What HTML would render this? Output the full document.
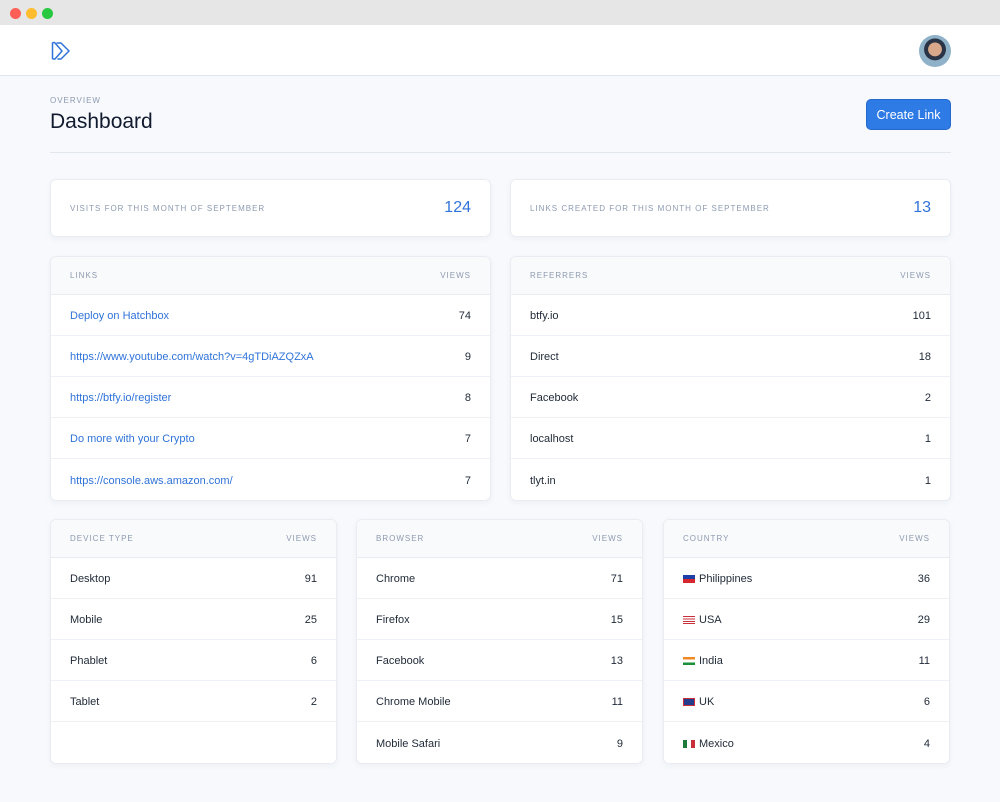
<!DOCTYPE html>
<html><head><meta charset="utf-8"><style>
*{box-sizing:border-box;margin:0;padding:0}
body{width:1000px;height:802px;background:#f7f9fc;font-family:"Liberation Sans",sans-serif;position:relative;overflow:hidden;color:#1a2233}
.tb{position:absolute;left:0;top:0;width:1000px;height:25px;background:#e6e6e6}
.dot{position:absolute;top:8px;width:11px;height:11px;border-radius:50%}
.nav{position:absolute;left:0;top:25px;width:1000px;height:51px;background:#fff;border-bottom:1px solid #dfe6f0}
.card{position:absolute;background:#fff;border:1px solid #e9edf3;border-radius:6px;box-shadow:0 2px 6px rgba(30,50,90,.05);overflow:hidden}
.lbl{font-size:8px;letter-spacing:1px;color:#8d9ab0;text-transform:uppercase}
.hd{height:38px;background:#f9fafc;border-bottom:1px solid #e9edf3;display:flex;justify-content:space-between;align-items:center;padding:0 19px}
.row{height:41px;border-bottom:1px solid #edf1f6;display:flex;justify-content:space-between;align-items:center;padding:2px 19px 0;font-size:11px;color:#1f2937}
.row:last-child{border-bottom:none}
.a{color:#2f73d9}
.fl{display:inline-block;width:12px;height:8px;vertical-align:-1px;margin-right:4px}
</style></head><body>
<div class="tb"><div class="dot" style="left:10px;background:#fe5f57"></div><div class="dot" style="left:26px;background:#febc2e"></div><div class="dot" style="left:42px;background:#28c840"></div></div>
<div class="nav">
<svg style="position:absolute;left:50px;top:15px" width="24" height="22" viewBox="0 0 24 22" fill="none" stroke="#2f73d9" stroke-width="1.5" stroke-linejoin="round" stroke-linecap="round"><path d="M2.5 3 V18 Q2.5 19 3.5 19 H5 L12 11 L5 3 Q4 2 2.5 3 Z"/><path d="M7 3 H11 L19 11 L11 19 H8"/></svg>
<div style="position:absolute;left:919px;top:10px;width:32px;height:32px;border-radius:50%;background:radial-gradient(circle at 50% 45%,#d9a88a 0 28%,#2b3346 30% 45%,#8fb2c8 47%);"></div>
</div>
<div class="lbl" style="position:absolute;left:50px;top:96px;font-size:8px">Overview</div>
<div style="position:absolute;left:50px;top:110px;font-size:21px;color:#111a2e">Dashboard</div>
<div style="position:absolute;left:866px;top:99px;width:85px;height:31px;background:#2f7be5;border:1px solid #2468cc;border-radius:5px;color:#fff;font-size:12.5px;display:flex;align-items:center;justify-content:center">Create Link</div>
<div style="position:absolute;left:50px;top:152px;width:901px;height:1px;background:#e2e7ee"></div>

<div class="card" style="left:50px;top:179px;width:441px;height:58px;display:flex;justify-content:space-between;align-items:center;padding:0 19px"><span class="lbl">Visits for this month of September</span><span style="font-size:16px;color:#2f73d9">124</span></div>
<div class="card" style="left:510px;top:179px;width:441px;height:58px;display:flex;justify-content:space-between;align-items:center;padding:0 19px"><span class="lbl">Links created for this month of September</span><span style="font-size:16px;color:#2f73d9">13</span></div>

<div class="card" style="left:50px;top:256px;width:441px;height:245px">
<div class="hd"><span class="lbl">Links</span><span class="lbl">Views</span></div>
<div class="row"><span class="a">Deploy on Hatchbox</span><span>74</span></div>
<div class="row"><span class="a">https://www.youtube.com/watch?v=4gTDiAZQZxA</span><span>9</span></div>
<div class="row"><span class="a">https://btfy.io/register</span><span>8</span></div>
<div class="row"><span class="a">Do more with your Crypto</span><span>7</span></div>
<div class="row"><span class="a">https://console.aws.amazon.com/</span><span>7</span></div>
</div>
<div class="card" style="left:510px;top:256px;width:441px;height:245px">
<div class="hd"><span class="lbl">Referrers</span><span class="lbl">Views</span></div>
<div class="row"><span>btfy.io</span><span>101</span></div>
<div class="row"><span>Direct</span><span>18</span></div>
<div class="row"><span>Facebook</span><span>2</span></div>
<div class="row"><span>localhost</span><span>1</span></div>
<div class="row"><span>tlyt.in</span><span>1</span></div>
</div>

<div class="card" style="left:50px;top:519px;width:287px;height:245px">
<div class="hd"><span class="lbl">Device Type</span><span class="lbl">Views</span></div>
<div class="row"><span>Desktop</span><span>91</span></div>
<div class="row"><span>Mobile</span><span>25</span></div>
<div class="row"><span>Phablet</span><span>6</span></div>
<div class="row" style="border-bottom:1px solid #edf1f6"><span>Tablet</span><span>2</span></div>
</div>
<div class="card" style="left:356px;top:519px;width:287px;height:245px">
<div class="hd"><span class="lbl">Browser</span><span class="lbl">Views</span></div>
<div class="row"><span>Chrome</span><span>71</span></div>
<div class="row"><span>Firefox</span><span>15</span></div>
<div class="row"><span>Facebook</span><span>13</span></div>
<div class="row"><span>Chrome Mobile</span><span>11</span></div>
<div class="row"><span>Mobile Safari</span><span>9</span></div>
</div>
<div class="card" style="left:663px;top:519px;width:287px;height:245px">
<div class="hd"><span class="lbl">Country</span><span class="lbl">Views</span></div>
<div class="row"><span><span class="fl" style="background:linear-gradient(#1e3fa8 50%,#d8262e 50%)"></span>Philippines</span><span>36</span></div>
<div class="row"><span><span class="fl" style="background:repeating-linear-gradient(#c9303c 0 1.2px,#fff 1.2px 2.4px)"></span>USA</span><span>29</span></div>
<div class="row"><span><span class="fl" style="background:linear-gradient(#f08a24 33%,#fff 33% 66%,#1d8f3a 66%)"></span>India</span><span>11</span></div>
<div class="row"><span><span class="fl" style="background:#233c8c;box-shadow:inset 0 0 0 1px #c9303c"></span>UK</span><span>6</span></div>
<div class="row"><span><span class="fl" style="background:linear-gradient(90deg,#1d7a3a 33%,#fff 33% 66%,#c9303c 66%)"></span>Mexico</span><span>4</span></div>
</div>
</body></html>
